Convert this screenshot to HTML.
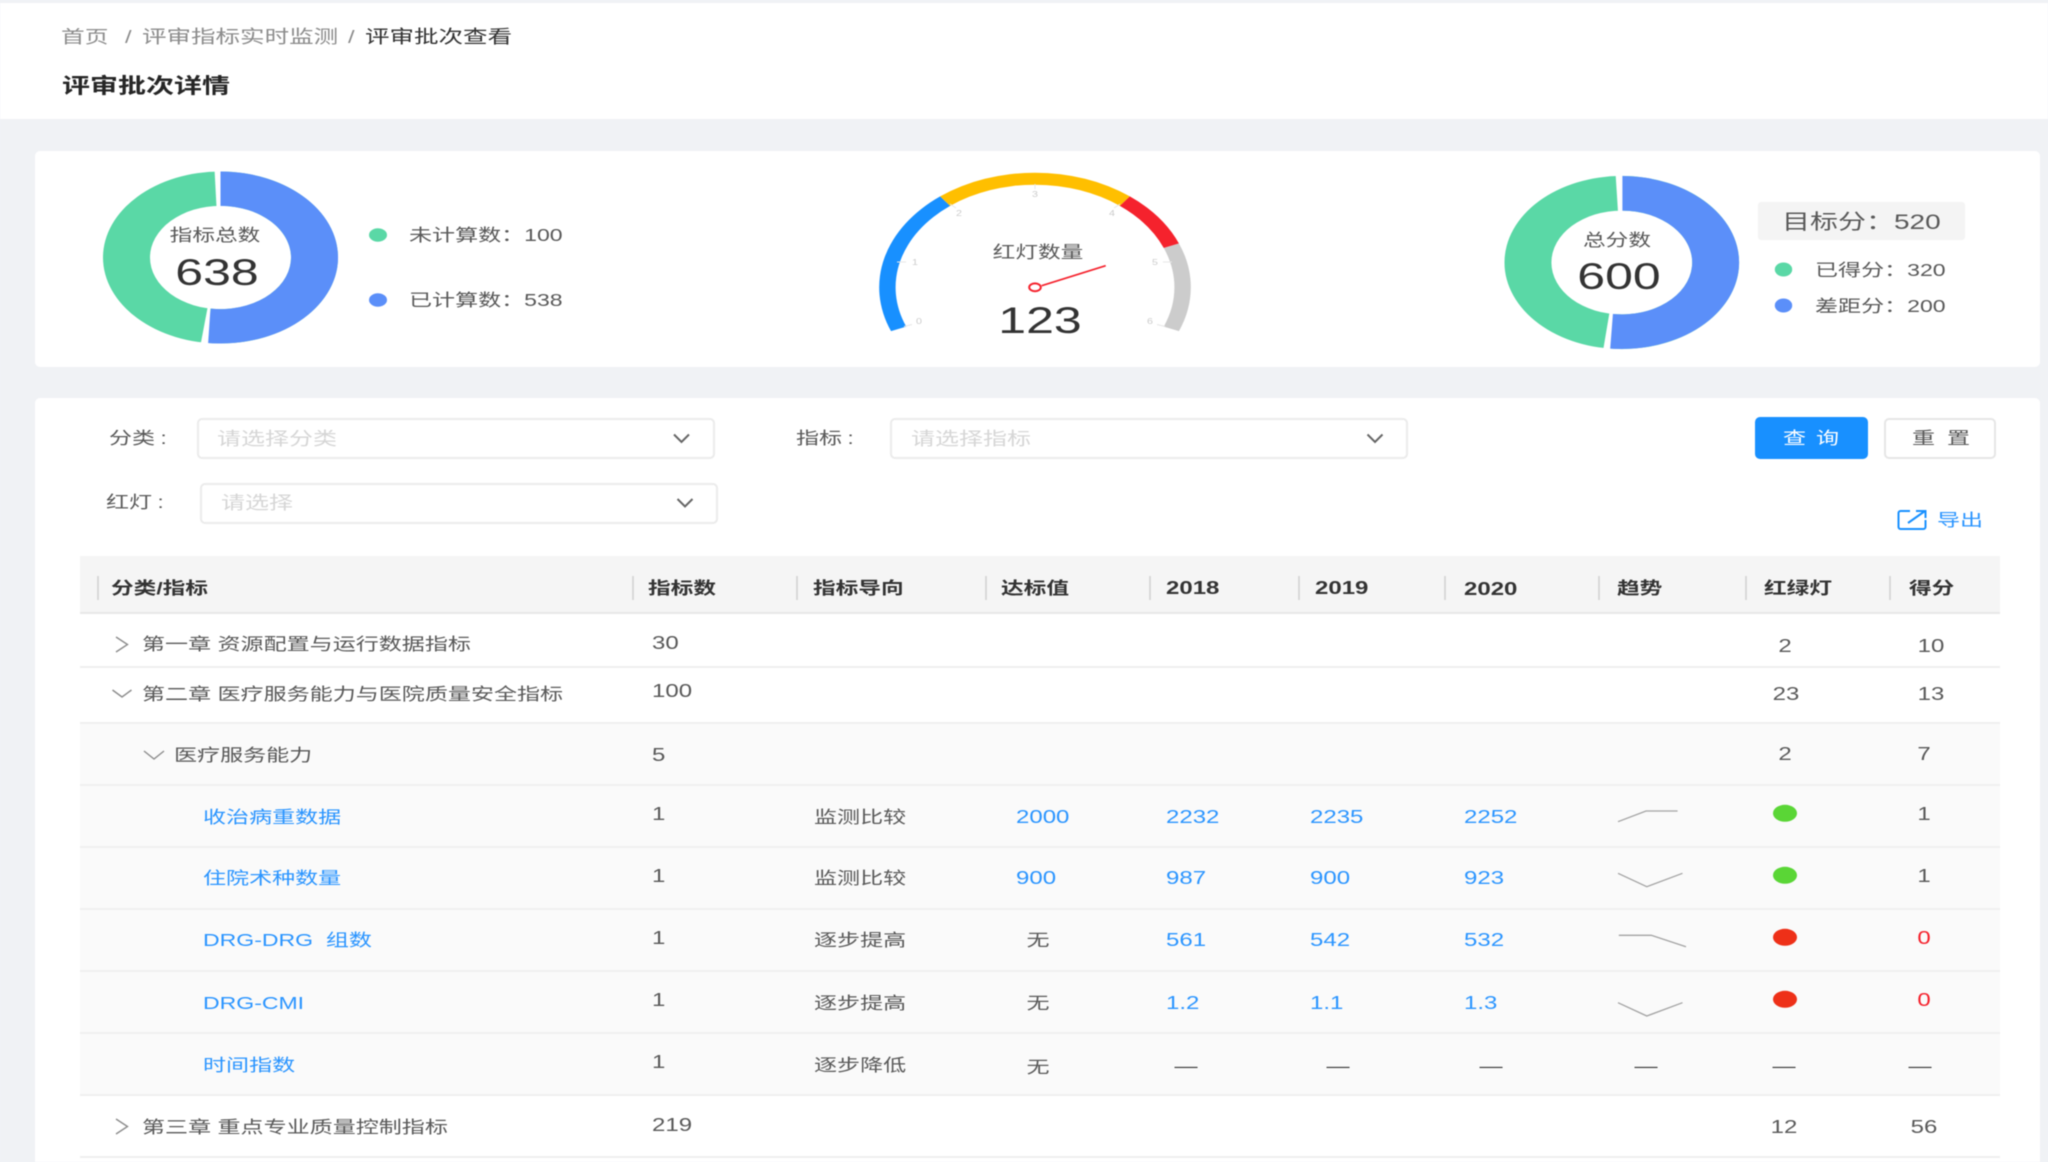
<!DOCTYPE html>
<html lang="zh-CN"><head><meta charset="utf-8"><title>评审批次详情</title>
<style>
html,body{margin:0;padding:0;background:#f0f2f5}
#p{position:relative;width:2048px;height:1162px;overflow:hidden;background:#f0f2f5;font-family:"Liberation Sans","Noto Sans CJK SC",sans-serif;filter:blur(.5px)}
.b{position:absolute;box-sizing:border-box}
.t,.c{position:absolute;height:0;line-height:0;white-space:nowrap;font-size:17.3px;color:#595959}
.t{transform:scaleX(1.333);transform-origin:left center}
.c{transform:translateX(-50%) scaleX(1.333);transform-origin:center center}
.h{font-weight:bold;color:#333;font-size:17px;top:589px}
.n{font-size:18px}
.l{color:#2b95ff}
.bg{font-size:37.5px;color:#333}
.s{background:#d9d9d9;width:2px;top:576px;height:24px;position:absolute}
.r{position:absolute;left:80px;width:1920px;height:2px;background:#efefef}
.se{position:absolute;box-sizing:border-box;border:2px solid #ebebeb;border-radius:5px;background:#fff}
.ph{color:#d6d6d6;font-size:18px}
.co{margin-left:4px}
svg{position:absolute;left:0;top:0}
</style></head><body><div id="p">
<div class="b" style="left:0;top:3px;width:2048px;height:116px;background:#fff"></div>
<div class="b" style="left:35px;top:151px;width:2005px;height:216px;background:#fff;border-radius:5px"></div>
<div class="b" style="left:35px;top:398px;width:2005px;height:770px;background:#fff;border-radius:5px"></div>
<div class="b" style="left:80px;top:556px;width:1920px;height:57px;background:#f5f5f5"></div>
<div class="b" style="left:80px;top:722px;width:1920px;height:372px;background:#fafafa"></div>
<div class="b" style="left:1758px;top:202px;width:207px;height:38px;background:#f4f4f4;border-radius:3px"></div>

<div class="r" style="top:612px;background:#e8e8e8"></div>
<div class="r" style="top:666px"></div><div class="r" style="top:722px"></div><div class="r" style="top:784px"></div><div class="r" style="top:846px"></div><div class="r" style="top:908px"></div><div class="r" style="top:970px"></div><div class="r" style="top:1032px"></div><div class="r" style="top:1094px"></div><div class="r" style="top:1156px"></div>

<div class="s" style="left:97px"></div><div class="s" style="left:632px"></div><div class="s" style="left:796px"></div><div class="s" style="left:985px"></div><div class="s" style="left:1149px"></div><div class="s" style="left:1298px"></div><div class="s" style="left:1444px"></div><div class="s" style="left:1598px"></div><div class="s" style="left:1745px"></div><div class="s" style="left:1889px"></div>

<svg width="2048" height="1162" viewBox="0 0 2048 1162">
<path fill="#5ad8a6" fill-rule="evenodd" d="M103 257.500a117.500 86 0 1 0 235 0a117.500 86 0 1 0-235 0ZM150 257.500a70.500 51.600 0 1 0 141 0a70.500 51.600 0 1 0-141 0Z"/>
<path fill="#5b8ff9" d="M220.500 171.500A117.500 86 0 1 1 204.550 342.700L210.930 308.620A70.500 51.600 0 1 0 220.500 205.900Z"/>
<polygon fill="#fff" points="214.500,169 220.500,169 220.500,207 216.500,207"/>
<polygon fill="#fff" points="200.500,345 208,345 210.500,308 207.500,308"/>
<path fill="#5ad8a6" fill-rule="evenodd" d="M1504.500 262.500a117.300 86.500 0 1 0 234.600 0a117.300 86.500 0 1 0-234.600 0ZM1551.400 262.500a70.400 51.900 0 1 0 140.800 0a70.400 51.900 0 1 0-140.800 0Z"/>
<path fill="#5b8ff9" d="M1621.800 176A117.300 86.500 0 1 1 1605.880 348.200L1612.250 313.920A70.400 51.900 0 1 0 1621.800 210.600Z"/>
<polygon fill="#fff" points="1615.600,174 1622.400,174 1622.400,212 1618,212"/>
<polygon fill="#fff" points="1603,351 1610,351 1613,313 1609.400,313"/>
<ellipse cx="378" cy="235" rx="9" ry="6.700" fill="#5ad8a6"/>
<ellipse cx="378" cy="300" rx="9" ry="6.700" fill="#5b8ff9"/>
<ellipse cx="1783.500" cy="269.500" rx="8.700" ry="7" fill="#5ad8a6"/>
<ellipse cx="1783.500" cy="305.500" rx="8.700" ry="7" fill="#5b8ff9"/>

<path fill="#1890ff" d="M891.060 331.160A155.800 114.600 0 0 1 940.150 196.380L950.130 205.900A139.400 102.600 0 0 0 906.210 326.570Z"/>
<path fill="#ffbf00" d="M940.150 196.380A155.800 114.600 0 0 1 1129.850 196.380L1119.870 205.900A139.400 102.600 0 0 0 950.130 205.900Z"/>
<path fill="#f5222d" d="M1129.850 196.380A155.800 114.600 0 0 1 1178.940 243.440L1163.790 248.030A139.400 102.600 0 0 0 1119.870 205.900Z"/>
<path fill="#cccccc" d="M1178.940 243.440A155.800 114.600 0 0 1 1178.940 331.160L1163.790 326.570A139.400 102.600 0 0 0 1163.790 248.030Z"/>
<g stroke="#e6e6e6" stroke-width="1" fill="none">
<path d="M904 326.500l8-2M897 262h9M950 204l6 4M1035 184v5M1120 204l-6 4M1172 262h-9M1165 326.500l-8-2"/>
</g>
<path d="M1041.700 285.700L1105.700 265.700" stroke="#f5222d" stroke-width="1.600" fill="none"/>
<ellipse cx="1035" cy="287.300" rx="5.800" ry="3.900" fill="#fff" stroke="#f5222d" stroke-width="2"/>

<g fill="none" stroke="#8c8c8c" stroke-width="1.400">
<path d="M116 637l11.500 7.500-11.500 7.500M116 1119l11.500 7.500-11.500 7.500M112.500 690l9.500 7 9.500-7M144 751l10 8 10-8"/>
</g>
<g fill="none" stroke="#1890ff" stroke-width="2">
<path d="M1910 511h-9.500a2 2 0 0 0-2 2v14a2 2 0 0 0 2 2h23a2 2 0 0 0 2-2v-7"/>
<path d="M1908 523l17-12M1916 511h9.500v7"/>
</g>
<g fill="none" stroke="#a3a3a3" stroke-width="1.300">
<polyline points="1618,821.700 1646,811 1677.600,811"/>
<polyline points="1618,873.300 1646.800,886.700 1682.500,873.300"/>
<polyline points="1618.800,935.300 1651.300,935.300 1686,946.700"/>
<polyline points="1618,1002.700 1646.800,1016 1682.500,1002.700"/>
</g>
<ellipse cx="1785" cy="813.300" rx="12" ry="8.500" fill="#5ad636"/>
<ellipse cx="1785" cy="875.300" rx="12" ry="8.500" fill="#5ad636"/>
<ellipse cx="1785" cy="937.300" rx="12" ry="8.500" fill="#ee3018"/>
<ellipse cx="1785" cy="999.300" rx="12" ry="8.500" fill="#ee3018"/>
</svg>

<span class="t" style="left:60.500px;top:37px;font-size:17.800px;color:#8c8c8c">首页</span>
<span class="t" style="left:125px;top:37px;font-size:17.800px;color:#8c8c8c">/</span>
<span class="t" style="left:142px;top:37px;font-size:18.400px;color:#8c8c8c">评审指标实时监测</span>
<span class="t" style="left:348px;top:37px;font-size:17.800px;color:#8c8c8c">/</span>
<span class="t" style="left:365px;top:37px;font-size:18.400px;color:#333">评审批次查看</span>
<span class="t" style="left:62px;top:87px;font-size:21px;font-weight:bold;color:#262626">评审批次详情</span>

<span class="c" style="left:215px;top:236px;font-size:17px">指标总数</span>
<span class="c bg" style="left:217px;top:272px">638</span>
<span class="t" style="left:409px;top:235px">未计算数：100</span>
<span class="t" style="left:409px;top:300px">已计算数：538</span>

<span class="c" style="left:1038px;top:253px;font-size:17px">红灯数量</span>
<span class="c bg" style="left:1040px;top:320px">123</span>
<span class="c" style="left:919px;top:322px;font-size:8px;color:#ccc">0</span>
<span class="c" style="left:915px;top:263px;font-size:8px;color:#ccc">1</span>
<span class="c" style="left:959px;top:214px;font-size:8px;color:#ccc">2</span>
<span class="c" style="left:1035px;top:195px;font-size:8px;color:#ccc">3</span>
<span class="c" style="left:1112px;top:214px;font-size:8px;color:#ccc">4</span>
<span class="c" style="left:1155px;top:263px;font-size:8px;color:#ccc">5</span>
<span class="c" style="left:1150px;top:322px;font-size:8px;color:#ccc">6</span>

<span class="c" style="left:1617px;top:241px;font-size:17px">总分数</span>
<span class="c bg" style="left:1619px;top:276px">600</span>
<span class="t" style="left:1781.500px;top:223px;font-size:21px">目标分：520</span>
<span class="t" style="left:1815px;top:269.500px">已得分：320</span>
<span class="t" style="left:1815px;top:305.500px">差距分：200</span>

<div class="se" style="left:197px;top:418px;width:518px;height:41px"></div>
<div class="se" style="left:890px;top:418px;width:518px;height:41px"></div>
<div class="se" style="left:200px;top:483px;width:518px;height:41px"></div>
<span class="t" style="left:109px;top:438px">分类<span class="co">:</span></span>
<span class="t ph" style="left:216.500px;top:438.500px">请选择分类</span>
<span class="t" style="left:796px;top:438px">指标<span class="co">:</span></span>
<span class="t ph" style="left:911px;top:438.500px">请选择指标</span>
<span class="t" style="left:106px;top:502px">红灯<span class="co">:</span></span>
<span class="t ph" style="left:220.500px;top:503px">请选择</span>
<svg width="2048" height="1162" viewBox="0 0 2048 1162"><g fill="none" stroke="#666" stroke-width="2"><path d="M674 434.500l7.500 7.500 7.500-7.500M1367.500 434.500l7.500 7.500 7.500-7.500M677.500 499l7.500 7.500 7.500-7.500"/></g></svg>

<div class="b" style="left:1755px;top:417px;width:113px;height:42px;background:#1890ff;border-radius:5px"></div>
<div class="b" style="left:1884px;top:418px;width:112px;height:41px;background:#fff;border:2px solid #e6e6e6;border-radius:5px"></div>
<span class="t" style="left:1783px;top:438px;color:#fff;letter-spacing:7.500px">查询</span>
<span class="t" style="left:1912px;top:438px;letter-spacing:9px">重置</span>
<span class="t l" style="left:1936.500px;top:520px">导出</span>

<span class="t h" style="left:111px">分类/指标</span>
<span class="t h" style="left:648px">指标数</span>
<span class="t h" style="left:812.500px">指标导向</span>
<span class="t h" style="left:1001px">达标值</span>
<span class="t h n" style="left:1166px;top:588px">2018</span>
<span class="t h n" style="left:1314.500px;top:588px">2019</span>
<span class="t h n" style="left:1464px">2020</span>
<span class="t h" style="left:1617px">趋势</span>
<span class="t h" style="left:1764px">红绿灯</span>
<span class="t h" style="left:1909px">得分</span>

<span class="t" style="left:142px;top:644px">第一章 资源配置与运行数据指标</span>
<span class="t n" style="left:652px;top:643px">30</span>
<span class="c n" style="left:1784.500px;top:645.500px">2</span>
<span class="c n" style="left:1931px;top:645.500px">10</span>

<span class="t" style="left:142px;top:693.500px">第二章 医疗服务能力与医院质量安全指标</span>
<span class="t n" style="left:651.500px;top:691px">100</span>
<span class="c n" style="left:1786px;top:693.500px">23</span>
<span class="c n" style="left:1931px;top:693.500px">13</span>

<span class="t" style="left:173.500px;top:754.500px">医疗服务能力</span>
<span class="t n" style="left:652px;top:755px">5</span>
<span class="c n" style="left:1784.500px;top:754px">2</span>
<span class="c n" style="left:1923.600px;top:754px">7</span>

<span class="t l" style="left:202.800px;top:816.500px">收治病重数据</span>
<span class="t n" style="left:652px;top:813.800px">1</span>
<span class="t" style="left:813.500px;top:816.500px">监测比较</span>
<span class="t n l" style="left:1016px;top:816.500px">2000</span>
<span class="t n l" style="left:1166.300px;top:816.500px">2232</span>
<span class="t n l" style="left:1310.400px;top:816.500px">2235</span>
<span class="t n l" style="left:1464px;top:816.500px">2252</span>
<span class="c n" style="left:1923.600px;top:813.800px">1</span>

<span class="t l" style="left:202.800px;top:878px">住院术种数量</span>
<span class="t n" style="left:652px;top:876px">1</span>
<span class="t" style="left:813.500px;top:878px">监测比较</span>
<span class="t n l" style="left:1016px;top:878px">900</span>
<span class="t n l" style="left:1166.300px;top:878px">987</span>
<span class="t n l" style="left:1310.400px;top:878px">900</span>
<span class="t n l" style="left:1464px;top:878px">923</span>
<span class="c n" style="left:1923.600px;top:876px">1</span>

<span class="t l" style="left:202.800px;top:940px">DRG-DRG&nbsp;&nbsp;组数</span>
<span class="t n" style="left:652px;top:938px">1</span>
<span class="t" style="left:813.500px;top:940px">逐步提高</span>
<span class="c" style="left:1037.500px;top:940px">无</span>
<span class="t n l" style="left:1166.300px;top:940px">561</span>
<span class="t n l" style="left:1310.400px;top:940px">542</span>
<span class="t n l" style="left:1464px;top:940px">532</span>
<span class="c n" style="left:1923.600px;top:938px;color:#f5222d">0</span>

<span class="t l" style="left:202.800px;top:1002.500px">DRG-CMI</span>
<span class="t n" style="left:652px;top:1000px">1</span>
<span class="t" style="left:813.500px;top:1002.500px">逐步提高</span>
<span class="c" style="left:1037.500px;top:1002.500px">无</span>
<span class="t n l" style="left:1166.300px;top:1002.500px">1.2</span>
<span class="t n l" style="left:1310.400px;top:1002.500px">1.1</span>
<span class="t n l" style="left:1464px;top:1002.500px">1.3</span>
<span class="c n" style="left:1923.600px;top:1000px;color:#f5222d">0</span>

<span class="t l" style="left:202.800px;top:1064.500px">时间指数</span>
<span class="t n" style="left:652px;top:1062px">1</span>
<span class="t" style="left:813.500px;top:1064.500px">逐步降低</span>
<span class="c" style="left:1037.500px;top:1066.700px">无</span>
<span class="c" style="left:1185.500px;top:1065.500px;color:#333">—</span>
<span class="c" style="left:1337.500px;top:1065.500px;color:#333">—</span>
<span class="c" style="left:1490.500px;top:1065.500px;color:#333">—</span>
<span class="c" style="left:1646px;top:1065.500px;color:#333">—</span>
<span class="c" style="left:1784px;top:1065.500px;color:#333">—</span>
<span class="c" style="left:1920px;top:1065.500px;color:#333">—</span>

<span class="t" style="left:142px;top:1127px">第三章 重点专业质量控制指标</span>
<span class="t n" style="left:652px;top:1125px">219</span>
<span class="c n" style="left:1783.800px;top:1126.700px">12</span>
<span class="c n" style="left:1924px;top:1126.700px">56</span>
</div></body></html>
